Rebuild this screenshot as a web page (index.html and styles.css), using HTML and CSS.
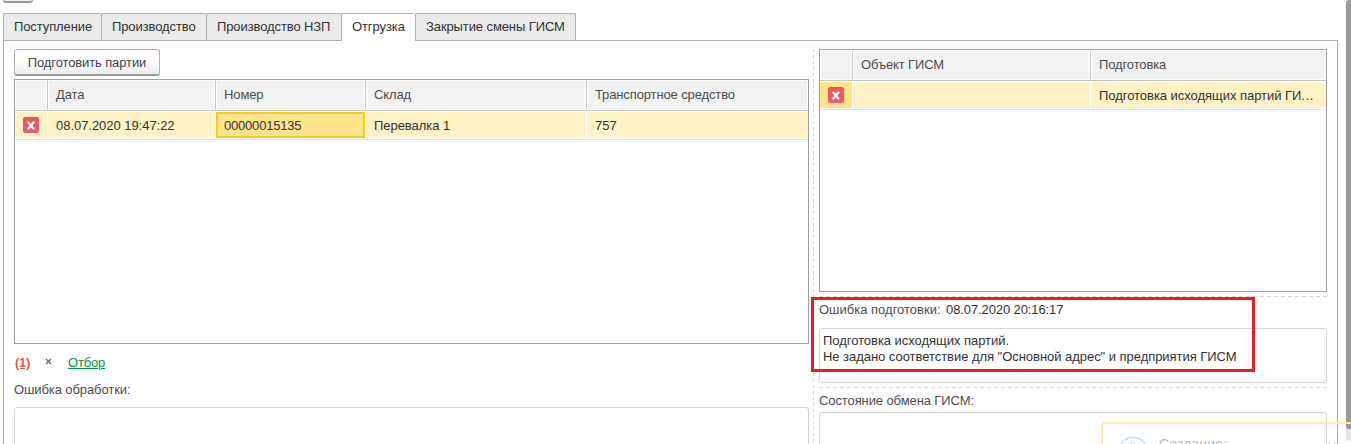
FILE: index.html
```
<!DOCTYPE html>
<html lang="ru">
<head>
<meta charset="utf-8">
<title>ГИСМ</title>
<link rel="stylesheet" href="styles.css">
</head>
<body>
<svg class="defs" width="0" height="0">
  <defs>
    <linearGradient id="red" x1="0" y1="0" x2="0" y2="1"><stop offset="0" stop-color="#e8584b"/><stop offset="1" stop-color="#ec5b7c"/></linearGradient>
    <symbol id="fail" viewBox="0 0 16 16"><rect width="16" height="16" rx="2" fill="url(#red)"/><path d="M4.7 4.8 11.1 12.4M11.1 4.8 4.7 12.4" stroke="#fff" stroke-width="2.1"/></symbol>
  </defs>
</svg>
<div class="app">
  <div class="stub"></div>
  <div class="tabs">
    <div class="tab t1">Поступление</div>
    <div class="tab t2">Производство</div>
    <div class="tab t3">Производство НЗП</div>
    <div class="tab t4 active">Отгрузка</div>
    <div class="tab t5">Закрытие смены ГИСМ</div>
  </div>
  <div class="panel">
    <div class="left">
      <button class="btn"><span class="btn-text">Подготовить партии</span></button>
      <div class="table orders">
        <div class="row head"><div></div><div>Дата</div><div>Номер</div><div>Склад</div><div>Транспортное средство</div></div>
        <div class="row data"><div class="mark"><svg width="16" height="16"><use href="#fail"/></svg></div><div>08.07.2020 19:47:22</div><div class="cell-selected">00000015135</div><div>Перевалка 1</div><div>757</div></div>
      </div>
      <div class="filters"><a class="count">(1)</a><svg class="clear" width="7" height="7"><path d="M1 1 6 6M6 1 1 6" stroke="#666" stroke-width="1.2"/></svg><a class="filter">Отбор</a></div>
      <div class="label proc">Ошибка обработки:</div>
      <div class="box tall"></div>
    </div>
    <div class="splitter"></div>
    <div class="right">
      <div class="table objects">
        <div class="row head"><div></div><div>Объект ГИСМ</div><div>Подготовка</div></div>
        <div class="row data"><div class="mark strong"><svg width="16" height="16"><use href="#fail"/></svg></div><div></div><div class="prep">Подготовка исходящих партий ГИ<span class="dots">...</span></div></div>
      </div>
      <div class="dash first"></div>
      <div class="label err"><span class="err-name">Ошибка подготовки:</span><span class="value">08.07.2020 20:16:17</span></div>
      <div class="box message"><div class="m1">Подготовка исходящих партий.</div><div class="m2">Не задано соответствие для "Основной адрес" и предприятия ГИСМ</div></div>
      <div class="dash second"></div>
      <div class="label state">Состояние обмена ГИСМ:</div>
      <div class="box tall"></div>
    </div>
  </div>
  <div class="scroll"><div class="thumb"></div></div>
  <div class="highlight"></div>
  <div class="toast">
    <svg class="info" width="32" height="32" viewBox="0 0 32 32" fill="none" stroke="#c7dcf3"><circle cx="16" cy="16" r="14.5" stroke-width="1.3"/><circle cx="15.5" cy="7" r="1.6"/><path d="M14 12h3v12h-3z"/></svg>
    <span class="toast-title">Создание:</span>
    <svg class="toast-close" width="8" height="8"><path d="M.8 .8 7.2 7.2M7.2 .8 .8 7.2" stroke="#bbb"/></svg>
  </div>
</div>
</body>
</html>
```
FILE: styles.css
```
* { box-sizing: border-box; }
body { margin: 0; background: #fff; color: #333; font: 13px/16px "Liberation Sans", Arial, sans-serif; letter-spacing: -0.04px; overflow: hidden; }
.defs { position: absolute; }
.app { position: relative; width: 1351px; height: 444px; overflow: hidden; }
.stub { width: 30px; height: 3px; margin-left: 3px; border: 1px solid #aaa; border-top: 0; border-bottom: 2px solid #999; border-radius: 0 0 3px 3px; background: #eee; }

.tabs { display: flex; margin: 10px 0 0 3px; height: 27px; letter-spacing: -0.1px; }
.tab { height: 27px; border: 1px solid #b0b0b0; border-bottom: 0; border-right: 0; border-radius: 2px 2px 0 0; background: #ebebeb; padding: 5px 0 0 10px; white-space: nowrap; }
.t1 { width: 98px; }
.t2 { width: 105px; }
.t3 { width: 135px; }
.t4 { width: 74px; }
.t5 { width: 161px; border-right: 1px solid #b0b0b0; }
.tab.active { background: #fff; height: 28px; position: relative; z-index: 1; }

.panel { display: flex; width: 1335px; height: 420px; margin-left: 3px; border: 1px solid #b0b0b0; padding: 8px 10px 0; }
.left { width: 795px; }
.splitter { width: 1px; margin: 0 5px 0 4px; background: repeating-linear-gradient(#d5d5d5 0 3px, transparent 3px 6px); }
.right { width: 508px; }
.btn { display: block; width: 146px; height: 27px; padding: 1px 0 0; border: 1px solid #b0b0b0; border-bottom: 2px solid #999; border-radius: 3px; background: linear-gradient(#fff 45%, #ededed); color: #444; font: inherit; letter-spacing: -0.12px; white-space: nowrap; }

.table { border: 1px solid #a0a0a0; }
.orders { height: 265px; margin-top: 3px; }
.objects { height: 243px; }
.row { display: grid; }
.orders .row { grid-template-columns: 33px 168px 150px 221px 221px; }
.objects .row { grid-template-columns: 33px 238px 235px; }
.head { height: 31px; border-bottom: 1px solid #c6c6c6; color: #4d4d4d; letter-spacing: -0.12px; }
.head > div { border: 1px solid #fff; border-right: 1px solid #c6c6c6; background: #f2f2f2; padding: 6px 0 0 7px; box-shadow: inset -1px 0 #fff; }
.head > div:last-child { border-right-color: #fff; box-shadow: none; }
.data { height: 29px; padding: 1px 0; border-bottom: 1px solid #e5e5e5; color: #333; }
.data > div { border-right: 1px solid #fff; background: #fff2c7; padding: 6px 0 0 8px; white-space: nowrap; height: 26px; }
.data > div:last-child { border-right: 0; }
.data .mark { padding-top: 5px; }
.data .mark svg { display: block; }
.data .strong { background: #ffe48c; }
.data .cell-selected { background: #ffe48c; border: 2px solid #f9c823; padding: 4px 0 0 6px; margin-right: 1px; letter-spacing: -0.2px; }
.dots { letter-spacing: 0.6px; }

.filters { display: flex; height: 36px; padding-top: 11px; }
.count { height: 16px; color: #e8584b; font-weight: bold; text-decoration: underline; margin-left: 1px; width: 30px; letter-spacing: -0.3px; }
.clear { margin-top: 3px; }
.filter { color: #009646; text-decoration: underline; margin-left: 16px; letter-spacing: -0.2px; }
.label { color: #4d4d4d; white-space: nowrap; letter-spacing: -0.1px; }
.proc { height: 27px; padding-top: 2px; }
.box { border: 1px solid #d5d5d5; border-radius: 3px; }
.tall { height: 90px; }
.dash { height: 1px; background: repeating-linear-gradient(90deg, #d5d5d5 0 4px, transparent 4px 7px); }
.first { margin-top: 4px; }
.second { margin-top: 4px; }
.err { display: flex; height: 31px; padding-top: 5px; }
.value { color: #333; }
.err-name { width: 127px; letter-spacing: 0; }
.message { height: 55px; padding: 4px 3px 0; white-space: nowrap; }
.state { height: 24px; padding-top: 5px; }

/* layers floating above the form */
.scroll { position: absolute; left: 1346px; top: 0; width: 6px; height: 441px; background: #e3e3e3; border-radius: 3px; }
.thumb { height: 429px; background: #999; border-radius: 3px; }
.highlight { position: absolute; left: 811px; top: 297px; width: 444px; height: 75px; border: 3px solid #ed1c24; }
.toast { position: absolute; left: 1101px; top: 422px; width: 260px; height: 80px; border: 2px solid #ffedae; }
.info { position: absolute; left: 14px; top: 12px; }
.toast-title { position: absolute; left: 56px; top: 12px; color: #bbb; font-size: 14px; letter-spacing: 0.1px; }
.toast-close { position: absolute; left: 225px; top: 18px; }
```
